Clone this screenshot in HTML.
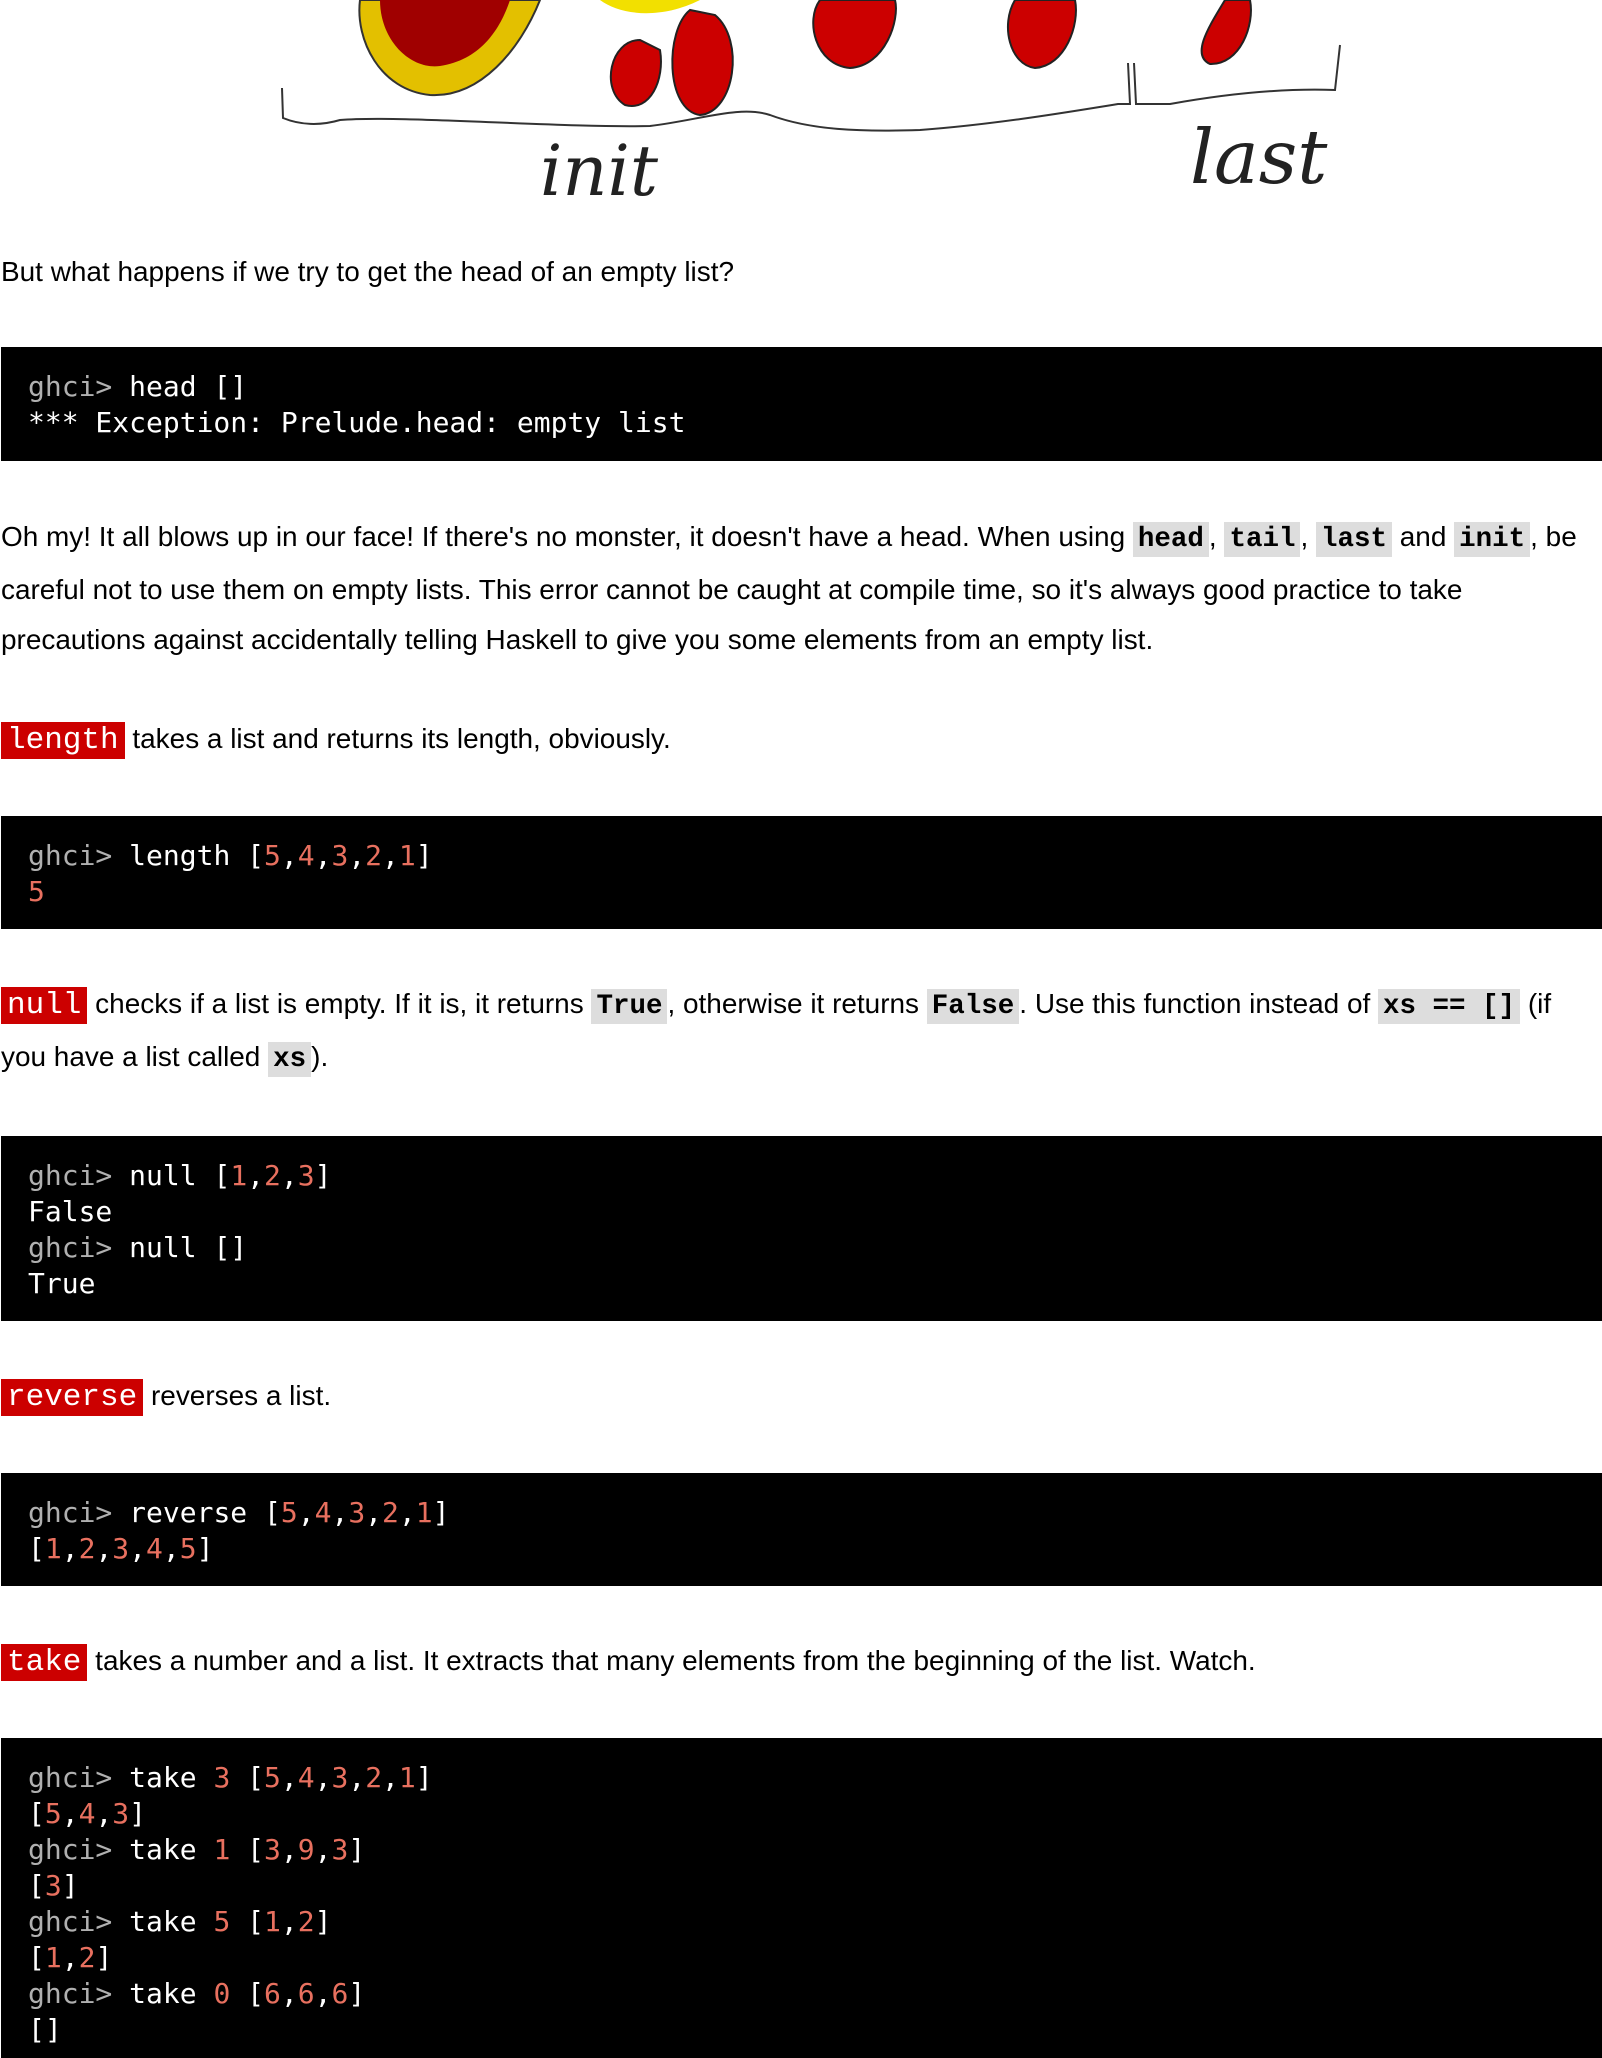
<!DOCTYPE html>
<html><head><meta charset="utf-8"><style>
body{margin:0;background:#fff;width:1602px;height:2048px;overflow:hidden;position:relative;font-family:"Liberation Sans",Arial,sans-serif;font-size:27.95px;color:#000}
.p{position:absolute;left:1px;right:0;line-height:50px;margin:0}
.pre{position:absolute;left:1px;width:1601px;background:#000;color:#fff;font-family:"DejaVu Sans Mono",monospace;font-size:28px;line-height:36px;padding:22px 0 0 27px;box-sizing:border-box;white-space:pre;margin:0}
.g{color:#b0b0b0}.n{color:#e8705f}
code{font-family:"Liberation Mono","Courier New",monospace;font-weight:bold;background:#ddd;padding:2px 5px;font-size:27.5px}
.f{background:#c00;color:#fff;font-family:"Liberation Mono",monospace;font-size:31px;padding:1px 6px;font-weight:normal}
</style></head><body>
<svg style="position:absolute;left:0;top:0" width="1602" height="210" viewBox="0 0 1602 210">
<path d="M360 0 C355 40 380 90 430 95 C480 98 520 50 540 0 Z" fill="#e3c000" stroke="#333" stroke-width="2"/>
<path d="M380 0 C380 40 410 70 440 66 C480 60 500 30 510 0 Z" fill="#a00000"/>
<path d="M600 0 C620 15 660 20 700 0 Z" fill="#f2e000"/>
<path d="M640 40 C610 40 600 90 625 105 C650 112 665 80 660 50 Z" fill="#cc0000" stroke="#222" stroke-width="2"/>
<path d="M690 10 C665 30 665 110 700 115 C735 112 745 40 715 15 Z" fill="#cc0000" stroke="#222" stroke-width="2"/>
<path d="M820 0 C805 20 815 65 850 68 C885 66 900 20 895 0 Z" fill="#cc0000" stroke="#222" stroke-width="2"/>
<path d="M1015 0 C1000 25 1010 65 1035 68 C1065 66 1080 25 1075 0 Z" fill="#cc0000" stroke="#222" stroke-width="2"/>
<path d="M1225 0 C1210 25 1190 55 1210 64 C1240 65 1255 25 1250 0 Z" fill="#cc0000" stroke="#222" stroke-width="2"/>
<path d="M282 88 L283 118 C300 125 320 126 340 120 C400 115 560 128 650 126 C700 120 740 105 770 115 C810 130 860 132 920 130 C1000 124 1080 110 1118 104 L1130 104 L1128 63 M1134 63 L1136 104 L1170 104 C1220 95 1280 88 1335 90 L1340 45" fill="none" stroke="#333" stroke-width="2"/>
<text x="540" y="195" font-family="DejaVu Serif,serif" font-style="italic" font-size="70" fill="#222">init</text>
<text x="1190" y="183" font-family="DejaVu Serif,serif" font-style="italic" font-size="75" fill="#222">last</text>
</svg>
<p class="p" style="top:247px">But what happens if we try to get the head of an empty list?</p>
<div class="pre" style="top:347px;height:114px"><span class="g">ghci&gt;</span> head []
*** Exception: Prelude.head: empty list</div>
<p class="p" style="top:512px">Oh my! It all blows up in our face! If there's no monster, it doesn't have a head. When using <code>head</code>, <code>tail</code>, <code>last</code> and <code>init</code>, be careful not to use them on empty lists. This error cannot be caught at compile time, so it's always good practice to take precautions against accidentally telling Haskell to give you some elements from an empty list.</p>
<p class="p" style="top:714px"><span class="f">length</span> takes a list and returns its length, obviously.</p>
<div class="pre" style="top:816px;height:113px"><span class="g">ghci&gt;</span> length [<span class="n">5</span>,<span class="n">4</span>,<span class="n">3</span>,<span class="n">2</span>,<span class="n">1</span>]
<span class="n">5</span></div>
<p class="p" style="top:979px"><span class="f">null</span> checks if a list is empty. If it is, it returns <code>True</code>, otherwise it returns <code>False</code>. Use this function instead of <code>xs == []</code> (if you have a list called <code>xs</code>).</p>
<div class="pre" style="top:1136px;height:185px"><span class="g">ghci&gt;</span> null [<span class="n">1</span>,<span class="n">2</span>,<span class="n">3</span>]
False
<span class="g">ghci&gt;</span> null []
True</div>
<p class="p" style="top:1371px"><span class="f">reverse</span> reverses a list.</p>
<div class="pre" style="top:1473px;height:113px"><span class="g">ghci&gt;</span> reverse [<span class="n">5</span>,<span class="n">4</span>,<span class="n">3</span>,<span class="n">2</span>,<span class="n">1</span>]
[<span class="n">1</span>,<span class="n">2</span>,<span class="n">3</span>,<span class="n">4</span>,<span class="n">5</span>]</div>
<p class="p" style="top:1636px"><span class="f">take</span> takes a number and a list. It extracts that many elements from the beginning of the list. Watch.</p>
<div class="pre" style="top:1738px;height:320px"><span class="g">ghci&gt;</span> take <span class="n">3</span> [<span class="n">5</span>,<span class="n">4</span>,<span class="n">3</span>,<span class="n">2</span>,<span class="n">1</span>]
[<span class="n">5</span>,<span class="n">4</span>,<span class="n">3</span>]
<span class="g">ghci&gt;</span> take <span class="n">1</span> [<span class="n">3</span>,<span class="n">9</span>,<span class="n">3</span>]
[<span class="n">3</span>]
<span class="g">ghci&gt;</span> take <span class="n">5</span> [<span class="n">1</span>,<span class="n">2</span>]
[<span class="n">1</span>,<span class="n">2</span>]
<span class="g">ghci&gt;</span> take <span class="n">0</span> [<span class="n">6</span>,<span class="n">6</span>,<span class="n">6</span>]
[]</div>
</body></html>
